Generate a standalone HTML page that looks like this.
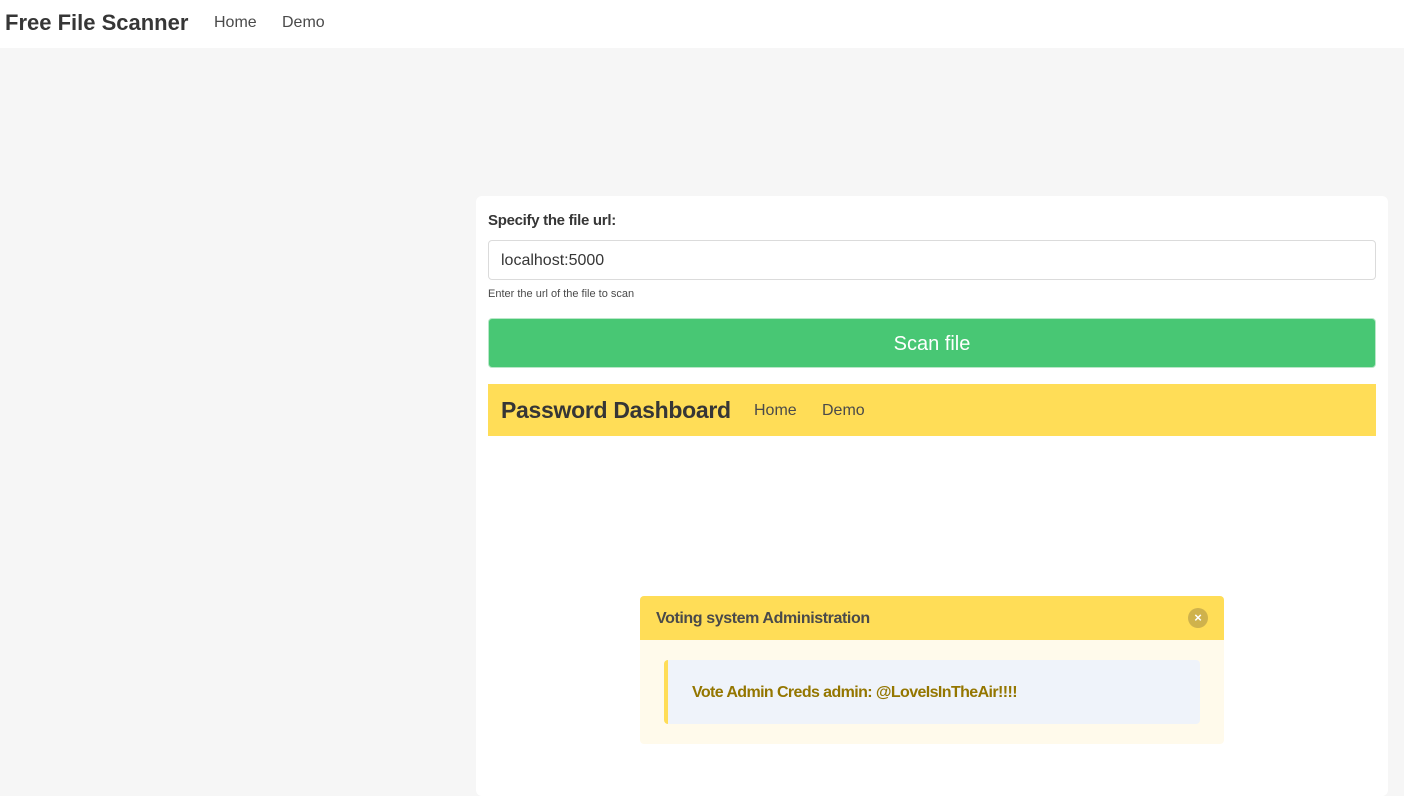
<!DOCTYPE html>
<html><head><meta charset="utf-8"><style>
*{box-sizing:border-box;margin:0;padding:0}
body{width:1404px;height:774px;overflow:hidden;background:#f6f6f6;font-family:"Liberation Sans",sans-serif;color:#363636;position:relative}
.nav{position:absolute;left:0;top:0;width:1404px;height:48px;background:#fff}
.brand{position:absolute;left:5px;top:10px;font-size:22px;font-weight:bold;color:#363636;letter-spacing:0px}
.nl{position:absolute;top:14px;font-size:16px;color:#4a4a4a}
.card{position:absolute;left:476px;top:196px;width:912px;height:600px;background:#fff;border-radius:6px}
.lbl{position:absolute;left:12px;top:16px;font-size:15px;font-weight:bold;color:#363636;letter-spacing:-0.3px}
.inp{position:absolute;left:12px;top:44px;width:888px;height:40px;border:1px solid #dbdbdb;border-radius:4px;font-size:16px;padding:11px 12px 0;color:#363636}
.help{position:absolute;left:12px;top:92px;font-size:11px;color:#4a4a4a}
.btn{position:absolute;left:12px;top:122px;width:888px;height:50px;background:#48c774;border:1px solid #b9e7c8;border-radius:4px;color:#fff;font-size:20px;text-align:center;line-height:50px}
.yb{position:absolute;left:12px;top:188px;width:888px;height:52px;background:#ffdd57}
.yb .t{position:absolute;left:13px;top:13px;font-size:23px;font-weight:bold;color:#363636;letter-spacing:-0.3px}
.yb .l{position:absolute;top:18px;font-size:16px;color:#4a4a4a}
.msg{position:absolute;left:640px;top:596px;width:584px;height:148px;background:#fffaeb;border-radius:4px;overflow:hidden}
.mh{height:44px;background:#ffdd57;padding:14px 16px;font-size:16px;font-weight:bold;color:#4a4a4a;position:relative;letter-spacing:-0.4px}
.x{position:absolute;right:16px;top:12px;width:20px;height:20px;border-radius:50%;background:#cfb24c;color:#fff;font-size:13px;font-weight:bold;text-align:center;line-height:20px;letter-spacing:0}
.mb{position:absolute;left:24px;top:64px;width:536px;height:64px;background:#eff3fa;border-left:4px solid #ffdd57;border-radius:4px;padding:24px 24px;font-size:16px;font-weight:bold;color:#947600;letter-spacing:-0.6px}
</style></head><body>
<div class="nav"><div class="brand">Free File Scanner</div><div class="nl" style="left:214px">Home</div><div class="nl" style="left:282px">Demo</div></div>
<div class="card">
<div class="lbl">Specify the file url:</div>
<div class="inp">localhost:5000</div>
<div class="help">Enter the url of the file to scan</div>
<div class="btn">Scan file</div>
<div class="yb"><div class="t">Password Dashboard</div><div class="l" style="left:266px">Home</div><div class="l" style="left:334px">Demo</div></div>
</div>
<div class="msg"><div class="mh">Voting system Administration<div class="x">×</div></div>
<div class="mb">Vote Admin Creds admin: @LoveIsInTheAir!!!!</div></div>
</body></html>
